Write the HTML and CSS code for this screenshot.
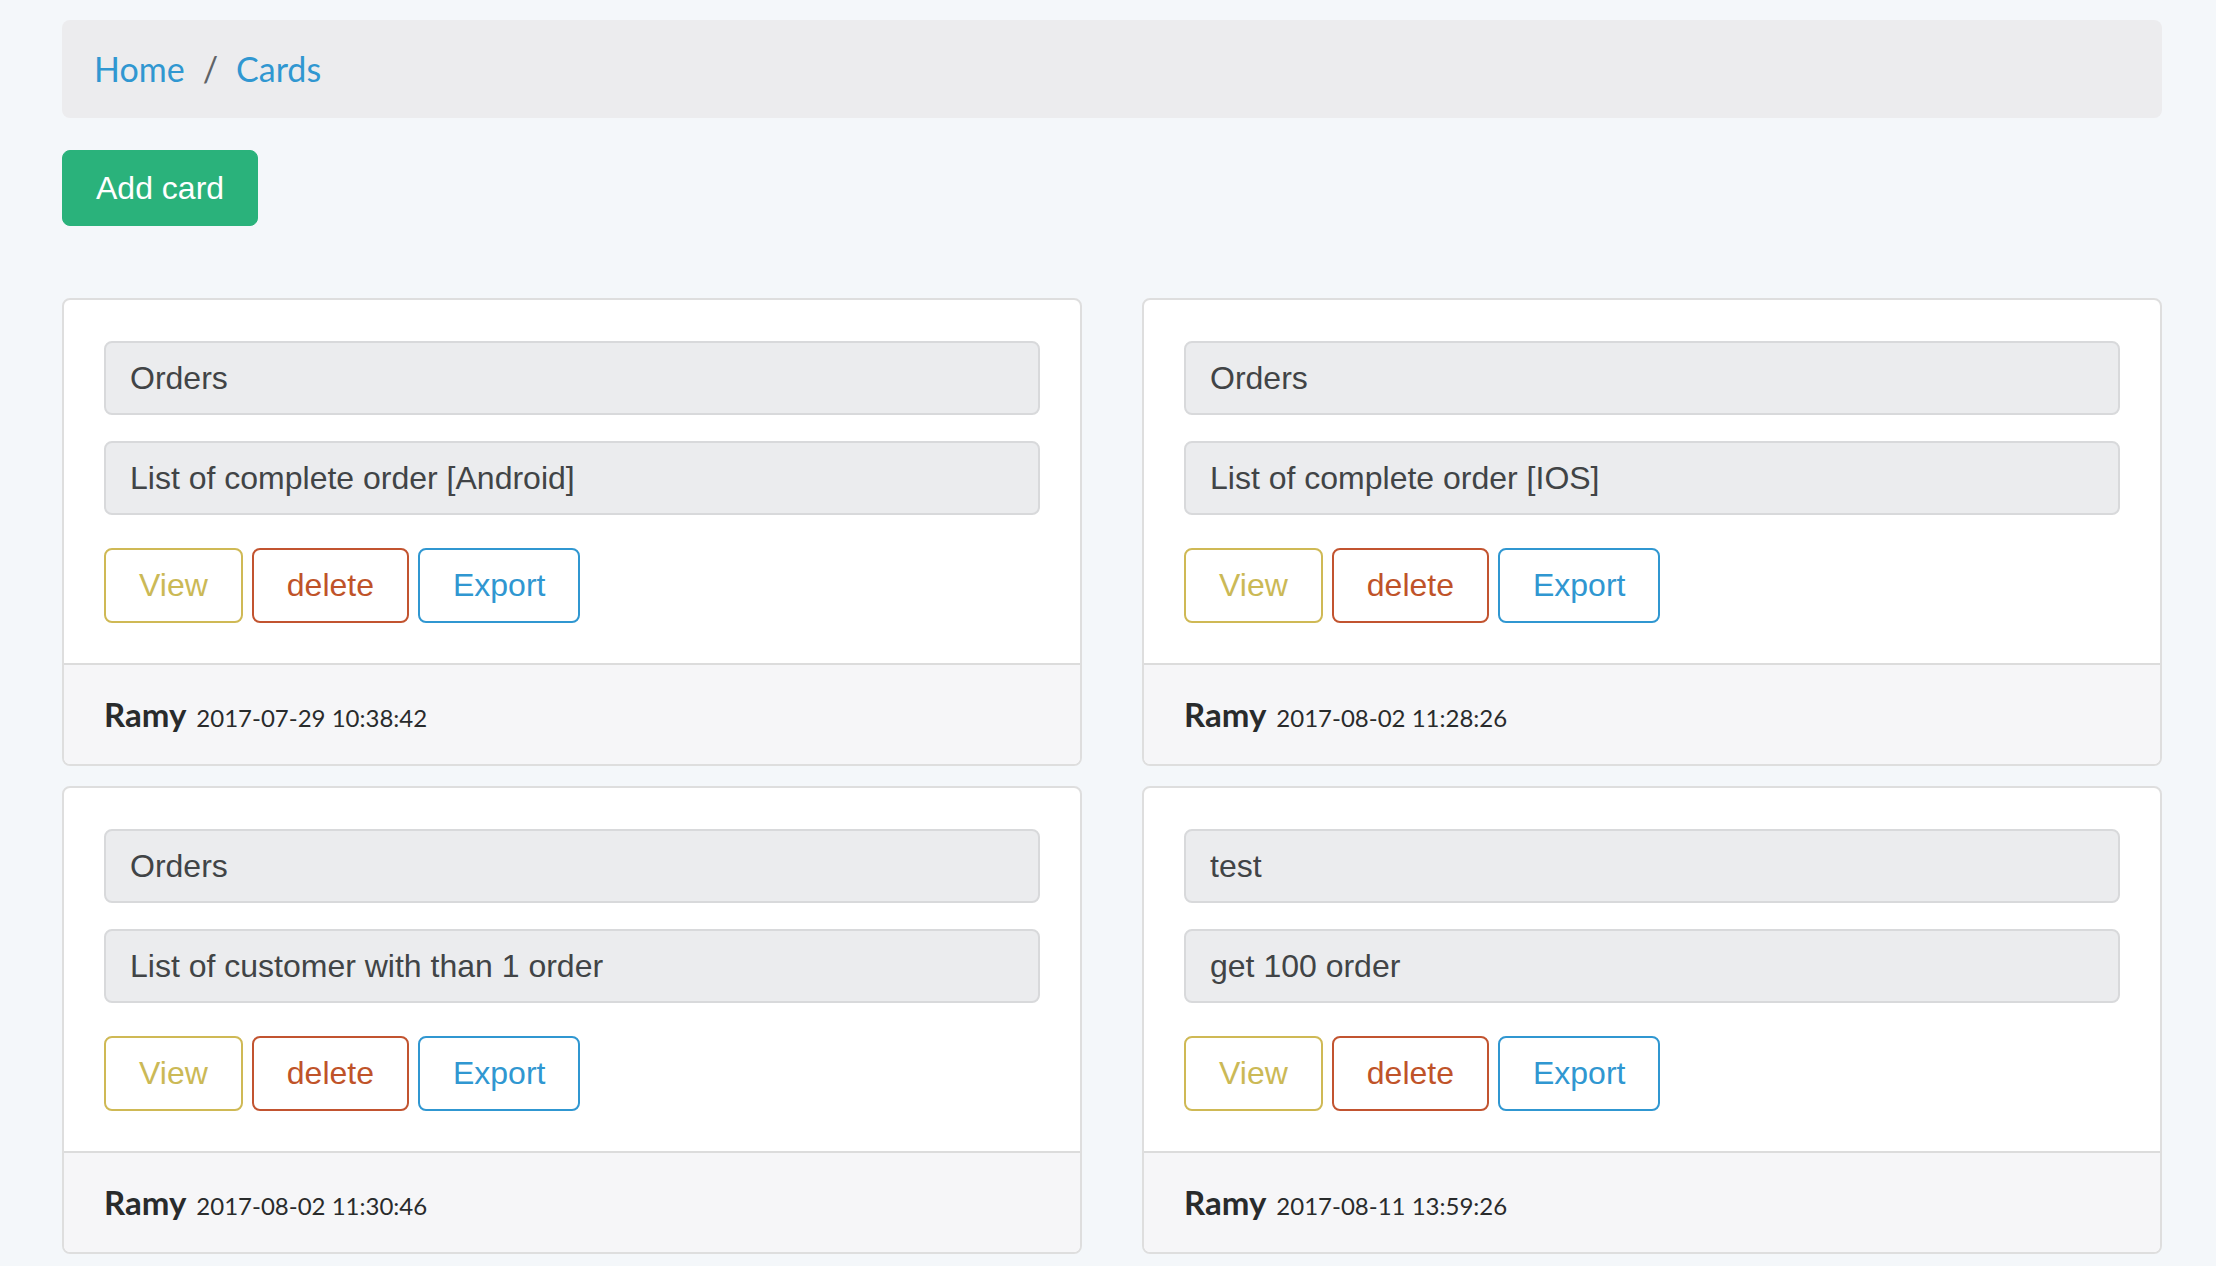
FILE: index.html
```html
<!DOCTYPE html>
<html lang="en">
<head>
<meta charset="utf-8">
<title>Cards</title>
<link rel="stylesheet" href="styles.css">
</head>
<body>
<div class="container">
  <nav class="breadcrumb">
    <a class="crumb" href="#">Home</a>
    <span class="sep">/</span>
    <a class="crumb" href="#">Cards</a>
  </nav>

  <div class="actions">
    <button class="btn-add">Add card</button>
  </div>

  <div class="grid">
    <div class="card">
      <div class="card-body">
        <div class="field">Orders</div>
        <div class="field">List of complete order [Android]</div>
        <div class="btns">
          <button class="btn btn-view">View</button>
          <button class="btn btn-delete">delete</button>
          <button class="btn btn-export">Export</button>
        </div>
      </div>
      <div class="card-footer"><span class="author">Ramy</span><span class="date">2017-07-29 10:38:42</span></div>
    </div>

    <div class="card">
      <div class="card-body">
        <div class="field">Orders</div>
        <div class="field">List of complete order [IOS]</div>
        <div class="btns">
          <button class="btn btn-view">View</button>
          <button class="btn btn-delete">delete</button>
          <button class="btn btn-export">Export</button>
        </div>
      </div>
      <div class="card-footer"><span class="author">Ramy</span><span class="date">2017-08-02 11:28:26</span></div>
    </div>

    <div class="card">
      <div class="card-body">
        <div class="field">Orders</div>
        <div class="field">List of customer with than 1 order</div>
        <div class="btns">
          <button class="btn btn-view">View</button>
          <button class="btn btn-delete">delete</button>
          <button class="btn btn-export">Export</button>
        </div>
      </div>
      <div class="card-footer"><span class="author">Ramy</span><span class="date">2017-08-02 11:30:46</span></div>
    </div>

    <div class="card">
      <div class="card-body">
        <div class="field">test</div>
        <div class="field">get 100 order</div>
        <div class="btns">
          <button class="btn btn-view">View</button>
          <button class="btn btn-delete">delete</button>
          <button class="btn btn-export">Export</button>
        </div>
      </div>
      <div class="card-footer"><span class="author">Ramy</span><span class="date">2017-08-11 13:59:26</span></div>
    </div>
  </div>
</div>
</body>
</html>
```

FILE: styles.css
```css
html, body {
  margin: 0;
  padding: 0;
  background: #f4f7fa;
}

body {
  font-family: "Lato", "Open Sans", sans-serif;
  color: #292b2c;
  padding-top: 20px;
}

.container {
  width: 2100px;
  margin-left: 62px;
}

.breadcrumb {
  display: flex;
  align-items: center;
  background: #ececee;
  border-radius: 8px;
  padding: 25px 32px;
  font-size: 34px;
  line-height: 48px;
}

.crumb {
  color: #3097d1;
  text-decoration: none;
}

.sep {
  color: #5f6367;
  padding: 0 18px;
}

.actions {
  margin-top: 32px;
}

.btn-add {
  font-family: "Liberation Sans", Arial, sans-serif;
  font-size: 32px;
  line-height: 40px;
  color: #ffffff;
  background: #2ab27b;
  border: 1px solid #2ab27b;
  border-radius: 8px;
  padding: 17px 33px;
  margin: 0;
  cursor: pointer;
}

.grid {
  display: grid;
  grid-template-columns: 1020px 1020px;
  column-gap: 60px;
  row-gap: 20px;
  margin-top: 72px;
}

.card {
  background: #ffffff;
  border: 2px solid #dedede;
  border-radius: 8px;
  overflow: hidden;
}

.card-body {
  padding: 41px 40px 40px 40px;
  display: flex;
  flex-direction: column;
}

.field {
  background: #ebecee;
  border: 2px solid #d8d9db;
  border-radius: 8px;
  padding: 15px 24px;
  font-family: "Liberation Sans", Arial, sans-serif;
  font-size: 32px;
  line-height: 40px;
  color: #414446;
  margin-bottom: 26px;
}

.field + .field {
  margin-bottom: 33px;
}

.btns {
  display: flex;
  gap: 9px;
}

.btn {
  font-family: "Liberation Sans", Arial, sans-serif;
  font-size: 32px;
  line-height: 39px;
  background: #ffffff;
  border: 2px solid;
  border-radius: 8px;
  padding: 16px 33px;
  margin: 0;
  cursor: pointer;
}

.btn-view {
  color: #cbb956;
  border-color: #cfb955;
}

.btn-delete {
  color: #bf5329;
  border-color: #c25430;
}

.btn-export {
  color: #3097d1;
  border-color: #3097d1;
}

.card-footer {
  display: flex;
  align-items: baseline;
  background: #f6f6f8;
  border-top: 2px solid #dcdcdc;
  padding: 25px 40px 0 40px;
  height: 74px;
}

.author {
  font-weight: 700;
  font-size: 33px;
  line-height: 48px;
  color: #292b2c;
}

.date {
  font-size: 24px;
  line-height: 48px;
  color: #292b2c;
  margin-left: 10px;
}
```
